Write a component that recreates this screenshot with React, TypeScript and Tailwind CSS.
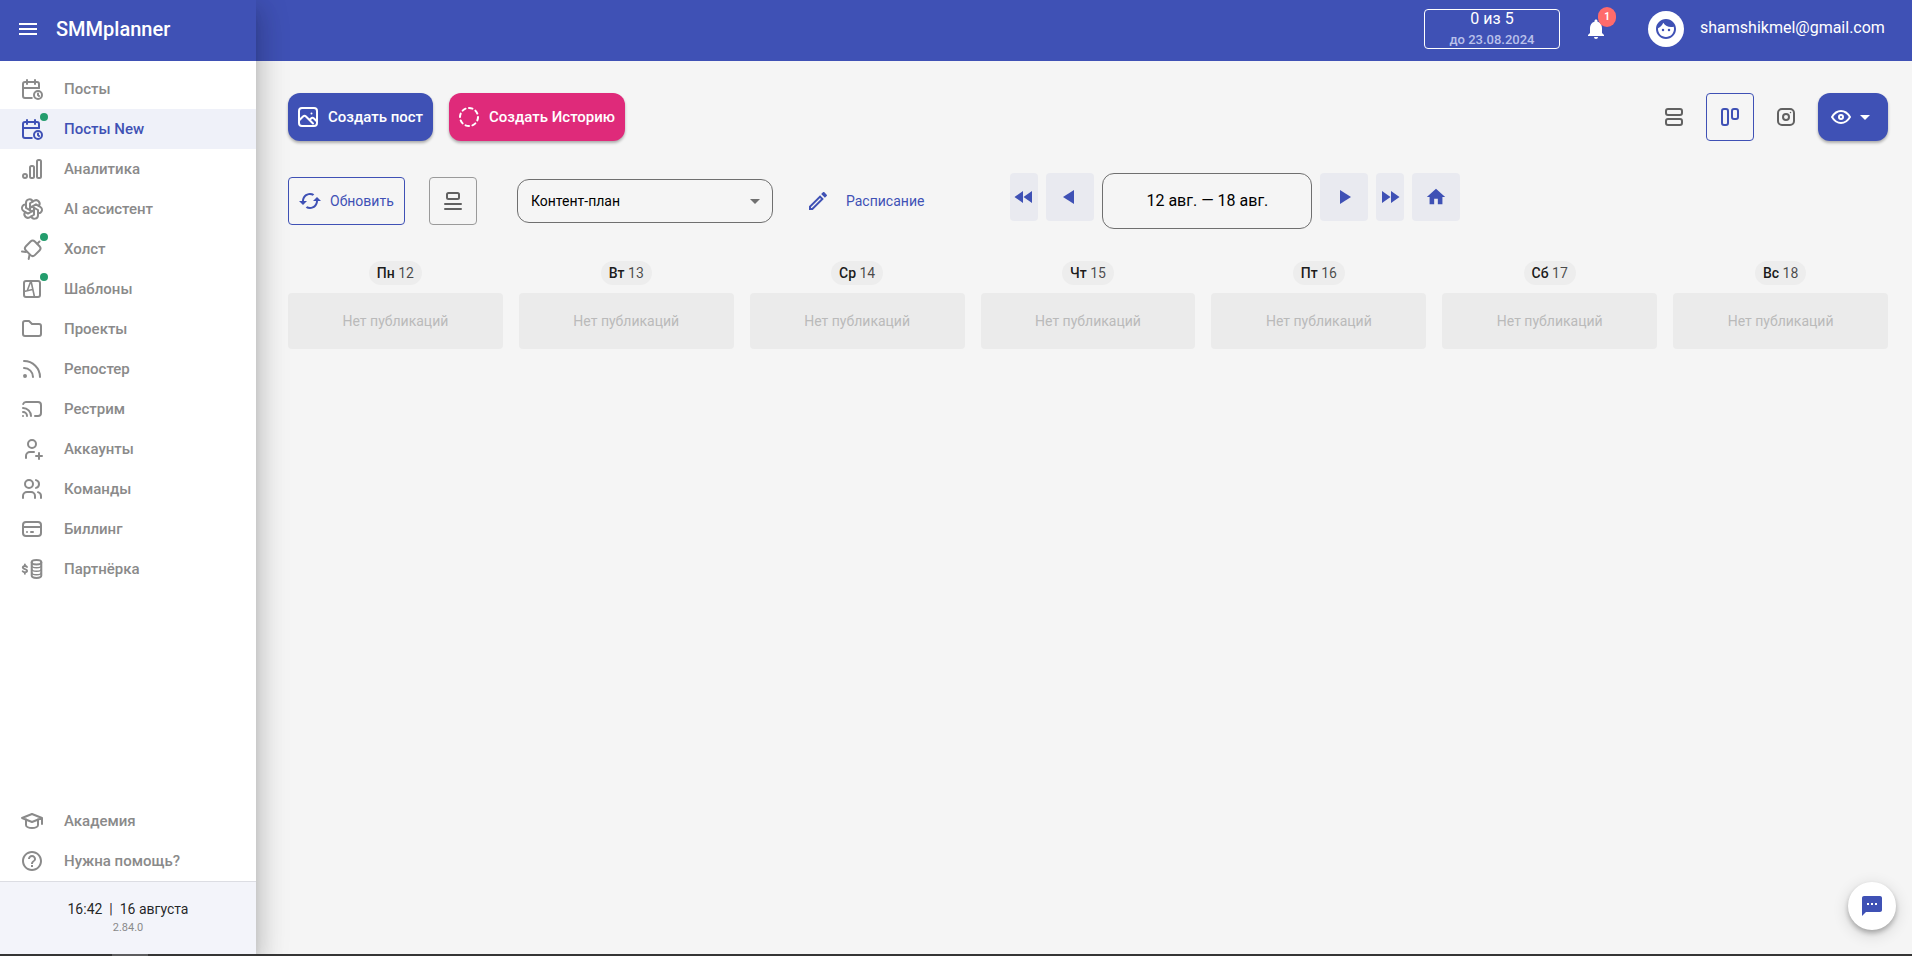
import React from "react";
import {
  MdArrowDropDown,
  MdCached,
  MdFace,
  MdFastForward,
  MdFastRewind,
  MdHelpOutline,
  MdHome,
  MdMenu,
  MdNotifications,
  MdOutlineEdit,
  MdPlayArrow,
  MdSms,
} from "react-icons/md";
import {
  TbBrandOpenai,
  TbCalendarTime,
  TbCast,
  TbCircleDashed,
  TbCreditCard,
  TbEye,
  TbFolder,
  TbRss,
  TbSchool,
  TbUserPlus,
  TbUsers,
} from "react-icons/tb";

type IconProps = { size?: number; className?: string };

type NavItem = {
  label: string;
  icon: React.ComponentType<IconProps>;
  dot?: boolean;
  active?: boolean;
};

function Outline({ size = 24, className, children }: IconProps & { children: React.ReactNode }) {
  return (
    <svg
      width={size}
      height={size}
      viewBox="0 0 24 24"
      fill="none"
      stroke="currentColor"
      strokeWidth="2"
      strokeLinecap="round"
      strokeLinejoin="round"
      className={className}
      aria-hidden="true"
    >
      {children}
    </svg>
  );
}

const BarsIcon = (props: IconProps) => (
  <Outline {...props}>
    <circle cx="5" cy="19" r="2" />
    <rect x="10" y="9" width="4" height="12" rx="1.5" />
    <rect x="17" y="3" width="4" height="18" rx="1.5" />
  </Outline>
);

const CanvasIcon = (props: IconProps) => (
  <Outline {...props}>
    <rect x="6.4" y="5" width="12.6" height="12.6" rx="3" transform="rotate(45 12.7 11.3)" />
    <path d="M2 14.500l4 .5M8.700 22l.8 -4M17.500 6.500l2 -2" />
  </Outline>
);

const TemplateIcon = (props: IconProps) => (
  <Outline {...props}>
    <rect x="4" y="4" width="16" height="16" rx="2" />
    <path strokeWidth="1.6" d="M11 4l3.500 16M4 14.500l8.500 -2M10.500 5l-3 8" />
  </Outline>
);

const CoinsIcon = (props: IconProps) => (
  <Outline {...props}>
    <ellipse cx="16.5" cy="5.2" rx="4.8" ry="2.2" />
    <path d="M11.700 5.200v13.400c0 1.300 2.100 2.400 4.800 2.400s4.800 -1.100 4.800 -2.400v-13.400" />
    <path
      strokeWidth="1.4"
      d="M11.700 8.500c0 1.300 2.100 2.300 4.800 2.300s4.800 -1 4.800 -2.300M11.700 12c0 1.300 2.100 2.300 4.800 2.300s4.800 -1 4.800 -2.300M11.700 15.400c0 1.300 2.100 2.300 4.800 2.300s4.800 -1 4.800 -2.300"
    />
    <path
      strokeWidth="1.9"
      d="M7 10c-.4 -.6 -1.200 -1 -2.200 -1c-1.300 0 -2 .6 -2 1.500c0 2 4.300 1.100 4.300 3.200c0 .9 -.9 1.500 -2.200 1.500c-1 0 -1.800 -.4 -2.200 -1M4.900 7.500v1.500M4.900 15.200v1.500"
    />
  </Outline>
);

const LinesIcon = (props: IconProps) => (
  <Outline {...props}>
    <rect x="6" y="4" width="12" height="6" rx="1.5" />
    <path d="M4 15h16M4 20h16" />
  </Outline>
);

const RowsIcon = (props: IconProps) => (
  <Outline {...props}>
    <rect x="4" y="4" width="16" height="6" rx="2" />
    <rect x="4" y="14" width="16" height="6" rx="2" />
  </Outline>
);

const ColumnsIcon = (props: IconProps) => (
  <Outline {...props}>
    <rect x="4" y="4" width="6" height="16" rx="2" />
    <rect x="14" y="4" width="6" height="10" rx="2" />
  </Outline>
);

const InstaIcon = (props: IconProps) => (
  <Outline {...props}>
    <rect x="4" y="4" width="16" height="16" rx="4" />
    <circle cx="12" cy="12" r="3" />
    <path strokeWidth="1.5" d="M16.500 7.500v.01" />
  </Outline>
);

const ImageIcon = (props: IconProps) => (
  <Outline {...props}>
    <rect x="3" y="3" width="18" height="18" rx="3" />
    <path d="M3 15.500l4 -4c1 -.9 2.100 -.9 3 0l7 7M14 14.500l1 -1c.9 -.9 2 -.9 3 0l3 3M15.500 8.500h.01" />
  </Outline>
);

const mainNav: NavItem[] = [
  { label: "Посты", icon: TbCalendarTime },
  { label: "Посты New", icon: TbCalendarTime, dot: true, active: true },
  { label: "Аналитика", icon: BarsIcon },
  { label: "AI ассистент", icon: TbBrandOpenai },
  { label: "Холст", icon: CanvasIcon, dot: true },
  { label: "Шаблоны", icon: TemplateIcon, dot: true },
  { label: "Проекты", icon: TbFolder },
  { label: "Репостер", icon: TbRss },
  { label: "Рестрим", icon: TbCast },
  { label: "Аккаунты", icon: TbUserPlus },
  { label: "Команды", icon: TbUsers },
  { label: "Биллинг", icon: TbCreditCard },
  { label: "Партнёрка", icon: CoinsIcon },
];

const helpNav: NavItem[] = [
  { label: "Академия", icon: TbSchool },
  { label: "Нужна помощь?", icon: MdHelpOutline },
];

const days = [
  { name: "Пн", date: 12 },
  { name: "Вт", date: 13 },
  { name: "Ср", date: 14 },
  { name: "Чт", date: 15 },
  { name: "Пт", date: 16 },
  { name: "Сб", date: 17 },
  { name: "Вс", date: 18 },
];

function NavList({ items }: { items: NavItem[] }) {
  return (
    <ul>
      {items.map(({ label, icon: Icon, dot, active }) => (
        <li key={label}>
          <a
            href="#"
            className={
              active
                ? "flex h-10 items-center gap-5 bg-[#eff1f9] px-5 text-[15px] font-medium text-[#3f51b5]"
                : "flex h-10 items-center gap-5 px-5 text-[15px] font-medium text-[#8a8a8a]"
            }
          >
            <span className="relative">
              <Icon size={24} />
              {dot && <span className="absolute -top-1 -right-1 size-2 rounded-full bg-[#249d6d]" />}
            </span>
            {label}
          </a>
        </li>
      ))}
    </ul>
  );
}

function Sidebar() {
  return (
    <aside className="z-10 flex w-64 shrink-0 flex-col bg-white shadow-[0_8px_10px_-5px_rgba(0,0,0,0.2),0_16px_24px_2px_rgba(0,0,0,0.14),0_6px_30px_5px_rgba(0,0,0,0.12)]">
      <div className="flex h-[61px] items-center gap-4 bg-[#3f51b5] px-4 pb-1 text-white">
        <button type="button" aria-label="Меню">
          <MdMenu size={24} />
        </button>
        <span className="text-xl font-medium">SMMplanner</span>
      </div>
      <nav className="flex flex-1 flex-col justify-between pt-2">
        <NavList items={mainNav} />
        <NavList items={helpNav} />
      </nav>
      <div className="flex h-[73px] flex-col items-center border-t border-[#dcdde3] bg-[#f3f4fa] pt-[17px]">
        <p className="text-sm leading-5 whitespace-pre text-black/87">16:42  |  16 августа</p>
        <p className="text-[11px] leading-[18px] text-[#8a8a8a]">2.84.0</p>
      </div>
    </aside>
  );
}

function Header() {
  return (
    <header className="flex h-[61px] items-center justify-end bg-[#3f51b5] pr-6 pb-1 text-white">
      <a href="#" className="flex h-10 w-[136px] flex-col items-center justify-center rounded border border-white">
        <span className="leading-[22px]">0 из 5</span>
        <span className="text-[13px] leading-5 font-medium text-[#b9c0ea]">до 23.08.2024</span>
      </a>
      <button type="button" aria-label="Уведомления" className="relative ml-6">
        <MdNotifications size={24} />
        <span className="absolute -top-2.5 -right-2 flex h-5 w-[18px] items-center justify-center rounded-full bg-[#ff6b6b] text-[10px] font-bold">
          1
        </span>
      </button>
      <span className="ml-10 flex size-9 items-center justify-center rounded-full bg-white text-[#3f51b5]">
        <MdFace size={24} />
      </span>
      <a href="#" className="ml-4 min-w-47 pb-0.5">
        shamshikmel@gmail.com
      </a>
    </header>
  );
}

function ActionBar() {
  return (
    <div className="flex items-center justify-between">
      <div className="flex gap-4 text-[15px] font-medium text-white">
        <button
          type="button"
          className="flex h-12 items-center gap-2 rounded-xl bg-[#3f51b5] pr-2.5 pl-2 shadow-[0_2px_3px_rgba(0,0,0,0.3)]"
        >
          <ImageIcon />
          Создать пост
        </button>
        <button
          type="button"
          className="flex h-12 items-center gap-2 rounded-xl bg-[#df2a7a] pr-2.5 pl-2 shadow-[0_2px_3px_rgba(0,0,0,0.3)]"
        >
          <TbCircleDashed size={24} />
          Создать Историю
        </button>
      </div>
      <div className="flex gap-2 text-[#616161]">
        <button type="button" aria-label="Список" className="flex size-12 items-center justify-center">
          <RowsIcon />
        </button>
        <button
          type="button"
          aria-label="Колонки"
          className="flex size-12 items-center justify-center rounded border border-[#3f51b5] text-[#3f51b5]"
        >
          <ColumnsIcon />
        </button>
        <button type="button" aria-label="Instagram" className="flex size-12 items-center justify-center">
          <InstaIcon />
        </button>
        <button
          type="button"
          aria-label="Вид"
          className="flex h-12 w-[70px] items-center justify-center rounded-xl bg-[#3f51b5] text-white shadow-[0_2px_3px_rgba(0,0,0,0.3)]"
        >
          <TbEye size={24} />
          <MdArrowDropDown size={24} />
        </button>
      </div>
    </div>
  );
}

function Filters() {
  return (
    <div className="flex items-start">
      <div className="flex items-center pt-1 text-sm text-[#3f51b5]">
        <button
          type="button"
          className="flex h-12 w-[117px] items-center gap-2 rounded border border-[#3f51b5] pl-[9px]"
        >
          <MdCached size={24} />
          Обновить
        </button>
        <button
          type="button"
          aria-label="Компактный вид"
          className="ml-6 flex size-12 items-center justify-center rounded border border-[#9a9a9a] text-[#616161]"
        >
          <LinesIcon />
        </button>
        <div className="relative ml-10">
          <select
            aria-label="Раздел"
            className="h-11 w-64 appearance-none rounded-xl border border-[#6f6f6f] bg-transparent pr-8 pl-[13px] text-sm text-black"
          >
            <option>Контент-план</option>
          </select>
          <MdArrowDropDown size={24} className="pointer-events-none absolute top-2.5 right-1.5 text-[#707070]" />
        </div>
        <button type="button" className="ml-[33px] flex items-center gap-4">
          <MdOutlineEdit size={24} />
          Расписание
        </button>
      </div>
      <div className="ml-[86px] flex gap-2 text-[#3f51b5]">
        <button type="button" aria-label="Месяц назад" className="flex h-12 w-7 items-center justify-center rounded bg-[#e9eaf0]">
          <MdFastRewind size={24} />
        </button>
        <button type="button" aria-label="Неделя назад" className="flex size-12 items-center justify-center rounded bg-[#e9eaf0]">
          <MdPlayArrow size={24} className="rotate-180" />
        </button>
        <button type="button" className="h-14 w-[210px] rounded-xl border border-[#6f6f6f] text-base text-black">
          12 авг. — 18 авг.
        </button>
        <button type="button" aria-label="Неделя вперёд" className="flex size-12 items-center justify-center rounded bg-[#e9eaf0]">
          <MdPlayArrow size={24} />
        </button>
        <button type="button" aria-label="Месяц вперёд" className="flex h-12 w-7 items-center justify-center rounded bg-[#e9eaf0]">
          <MdFastForward size={24} />
        </button>
        <button type="button" aria-label="Сегодня" className="flex size-12 items-center justify-center rounded bg-[#e9eaf0]">
          <MdHome size={22} />
        </button>
      </div>
    </div>
  );
}

function App() {
  return (
    <div className="flex min-h-screen flex-col bg-[#f5f5f5] font-['Roboto','Liberation_Sans',sans-serif]">
      <div className="flex flex-1 overflow-hidden">
        <Sidebar />
        <div className="flex min-w-0 flex-1 flex-col">
          <Header />
          <main className="flex flex-col gap-8 py-8 pr-6 pl-8">
            <ActionBar />
            <Filters />
            <div className="grid grid-cols-7 gap-4">
              {days.map((day) => (
                <section key={day.date} className="flex flex-col items-center gap-2 text-sm">
                  <h2 className="rounded-full bg-[#ededed] px-2 leading-6 text-black/70">
                    <span className="font-medium text-black/90">{day.name}</span> {day.date}
                  </h2>
                  <p className="flex h-14 w-full items-center justify-center rounded bg-[#ebebeb] text-[#bababa]">
                    Нет публикаций
                  </p>
                </section>
              ))}
            </div>
          </main>
        </div>
      </div>

      {/* Support chat */}
      <button
        type="button"
        aria-label="Чат поддержки"
        className="fixed right-4 bottom-[26px] flex size-12 items-center justify-center rounded-full bg-white text-[#3f51b5] shadow-[0_3px_5px_rgba(0,0,0,0.25),0_4px_16px_rgba(0,0,0,0.16)]"
      >
        <MdSms size={24} />
      </button>

      <footer className="h-0.5 bg-[#353535] pl-28">
        <div className="h-full w-9 bg-[#5c5c5e]" />
      </footer>
    </div>
  );
}

export default App;
